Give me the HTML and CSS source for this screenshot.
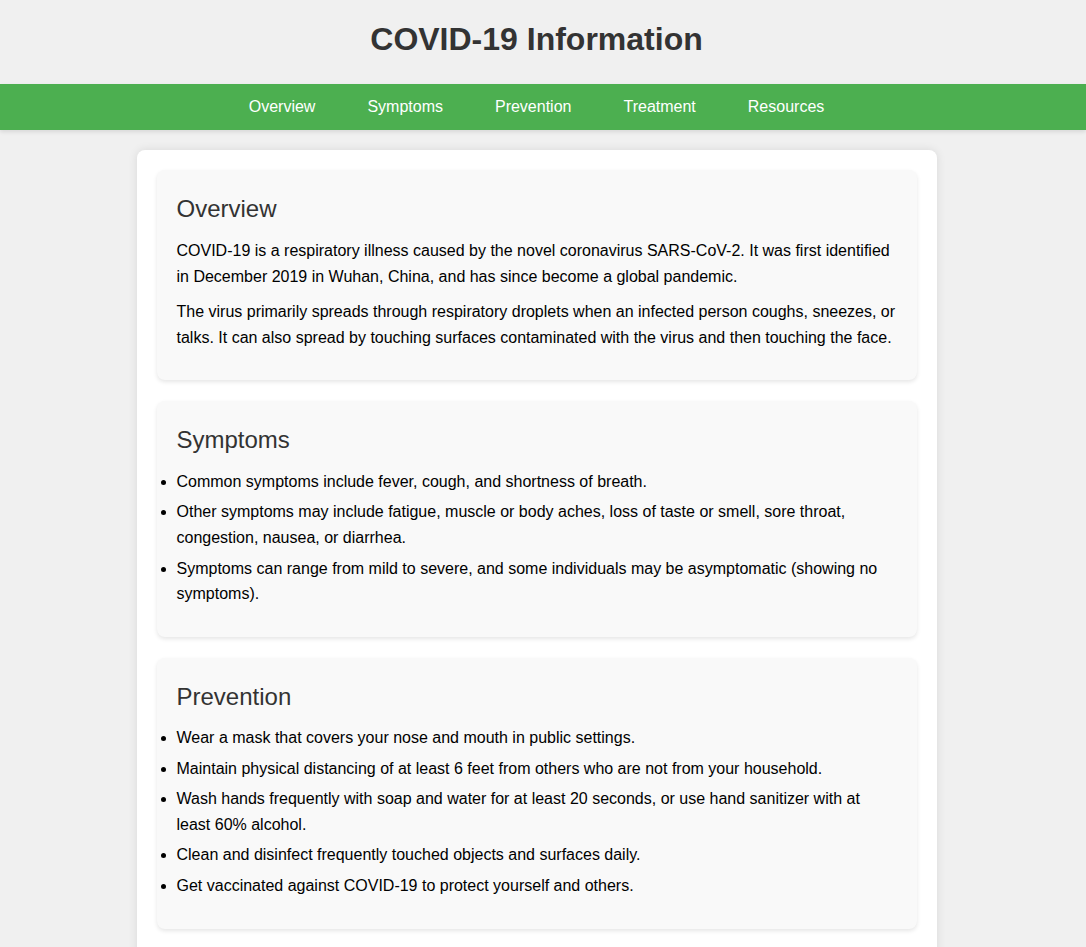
FILE: index.html
```html
<!DOCTYPE html>
<html lang="en">
<head>
<meta charset="utf-8">
<title>COVID-19 Information</title>
<link rel="stylesheet" href="styles.css">
</head>
<body>
<header class="site-header">
  <h1 class="title">COVID-19 Information</h1>
</header>
<nav class="nav">
  <a class="nav-link" href="#overview">Overview</a>
  <a class="nav-link" href="#symptoms">Symptoms</a>
  <a class="nav-link" href="#prevention">Prevention</a>
  <a class="nav-link" href="#treatment">Treatment</a>
  <a class="nav-link" href="#resources">Resources</a>
</nav>
<main class="container">
  <section class="card" id="overview">
    <h2 class="card-title">Overview</h2>
    <p class="text">COVID-19 is a respiratory illness caused by the novel coronavirus SARS-CoV-2. It was first identified in December 2019 in Wuhan, China, and has since become a global pandemic.</p>
    <p class="text">The virus primarily spreads through respiratory droplets when an infected person coughs, sneezes, or talks. It can also spread by touching surfaces contaminated with the virus and then touching the face.</p>
  </section>
  <section class="card" id="symptoms">
    <h2 class="card-title">Symptoms</h2>
    <ul class="list">
      <li>Common symptoms include fever, cough, and shortness of breath.</li>
      <li>Other symptoms may include fatigue, muscle or body aches, loss of taste or smell, sore throat, congestion, nausea, or diarrhea.</li>
      <li>Symptoms can range from mild to severe, and some individuals may be asymptomatic (showing no symptoms).</li>
    </ul>
  </section>
  <section class="card" id="prevention">
    <h2 class="card-title">Prevention</h2>
    <ul class="list">
      <li>Wear a mask that covers your nose and mouth in public settings.</li>
      <li>Maintain physical distancing of at least 6 feet from others who are not from your household.</li>
      <li>Wash hands frequently with soap and water for at least 20 seconds, or use hand sanitizer with at least 60% alcohol.</li>
      <li>Clean and disinfect frequently touched objects and surfaces daily.</li>
      <li>Get vaccinated against COVID-19 to protect yourself and others.</li>
    </ul>
  </section>
  <section class="card" id="treatment">
    <h2 class="card-title">Treatment</h2>
    <p class="text">Treatment for COVID-19 focuses on relieving symptoms and supporting the body's immune response.</p>
  </section>
</main>
</body>
</html>
```

FILE: styles.css
```css
html, body {
  margin: 0;
  padding: 0;
}
body {
  background: #f0f0f0;
  font-family: "Liberation Sans", Arial, sans-serif;
  font-size: 16px;
  line-height: 1.6;
  color: #000;
  padding-right: 13px;
}
.site-header {
  padding: 12px 0 18px;
  text-align: center;
}
.title {
  margin: 0;
  font-size: 32px;
  line-height: 54px;
  font-weight: bold;
  color: #333;
}
.nav {
  background: #4caf50;
  padding: 10px 13px 10px 0;
  margin-right: -13px;
  display: flex;
  justify-content: center;
  gap: 52px;
  box-shadow: 0 2px 4px rgba(0, 0, 0, 0.1);
}
.nav-link {
  color: #fff;
  text-decoration: none;
}
.container {
  width: 760px;
  margin: 20px auto;
  padding: 20px;
  background: #fff;
  border-radius: 8px;
  box-shadow: 0 0 10px rgba(0, 0, 0, 0.1);
}
.card {
  background: #f9f9f9;
  padding: 20px;
  margin-bottom: 21px;
  border-radius: 8px;
  box-shadow: 0 2px 4px rgba(0, 0, 0, 0.1);
}
.card-title {
  margin: 0 0 9px;
  font-size: 24px;
  font-weight: normal;
  color: #333;
}
.text {
  margin: 10px 0;
}
.list {
  margin: 0 0 10px;
  padding-left: 0;
}
.list li {
  margin-bottom: 5px;
}
```
